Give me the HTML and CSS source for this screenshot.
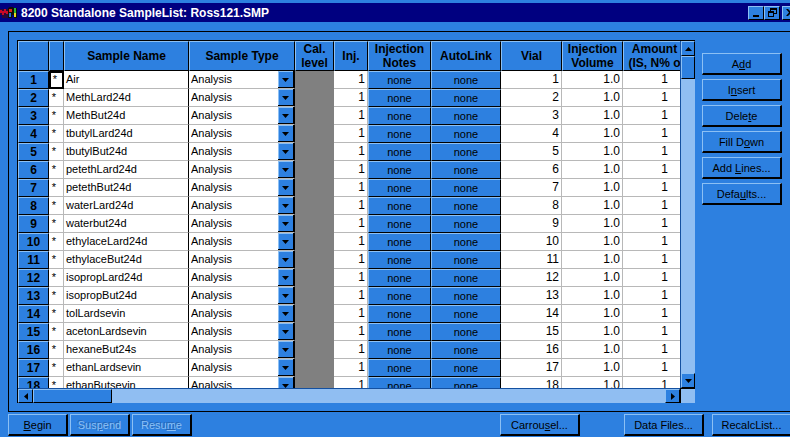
FILE: index.html
```html
<!DOCTYPE html>
<html lang="en">
<head>
  <meta charset="UTF-8">
  <meta name="viewport" content="width=device-width, initial-scale=1.0">
  <title>8200 Standalone SampleList: Ross121.SMP</title>
  <link rel="stylesheet" href="styles.css">
</head>
<body>

  <header class="titlebar">
    <svg class="app-icon" width="17" height="13" viewBox="0 0 17 13">
      <path d="M0 3h8v9H2V9H0z" fill="#280838"/>
      <path d="M0 4h2v1h2V3h2v2h2v3H6V7H4v2H2V7H0z" fill="#c80828"/>
      <path d="M8 2l2-1h3l1 1h3v10h-3V9h-2v3H8z" fill="#101008"/>
      <path d="M9 3h3v3H9z" fill="#e02818"/>
      <path d="M14 2h2v5h-2z" fill="#28b838"/>
      <path d="M9 7h2v4H9z" fill="#2878d8"/>
      <path d="M14 7h2v4h-2z" fill="#e8d820"/>
    </svg>
    <h1>8200 Standalone SampleList: Ross121.SMP</h1>
    <div class="window-controls">
      <button type="button" aria-label="Minimize">
        <svg width="12" height="10" viewBox="0 0 12 10"><path d="M3 7h6v2H3z"/></svg>
      </button>
      <button type="button" aria-label="Restore">
        <svg width="12" height="10" viewBox="0 0 12 10"><path d="M4 0h7v6H8V5h2V2H5v1H4zM2 3h6v6H2zM3 5v3h4V5z" fill-rule="evenodd"/></svg>
      </button>
      <button type="button" class="close" aria-label="Close">
        <svg width="12" height="10" viewBox="0 0 12 10"><path d="M2 1h2l2 2 2-2h2L7 4.500 10 8H8L6 6 4 8H2l3-3.500z"/></svg>
      </button>
    </div>
  </header>

  <main class="panel">
    <div class="grid">
      <div class="viewport">
        <table class="samples">
          <colgroup>
            <col class="col-num"><col class="col-mark"><col class="col-name"><col class="col-type">
            <col class="col-cal"><col class="col-inj"><col class="col-notes"><col class="col-link">
            <col class="col-vial"><col class="col-vial"><col class="col-notes">
          </colgroup>
          <thead>
            <tr>
              <th></th>
              <th></th>
              <th>Sample Name</th>
              <th>Sample Type</th>
              <th>Cal.<br>level</th>
              <th>Inj.</th>
              <th>Injection<br>Notes</th>
              <th>AutoLink</th>
              <th>Vial</th>
              <th>Injection<br>Volume</th>
              <th>Amount<br>(IS, N% o</th>
            </tr>
          </thead>
          <tbody id="sample-rows"></tbody>
        </table>
      </div>
      <div class="scroll scroll-v">
        <button type="button" aria-label="Scroll up"><svg width="7" height="4" viewBox="0 0 7 4"><path d="M0 4h7L3.500 0z"/></svg></button>
        <div class="thumb"></div>
        <button type="button" class="last" aria-label="Scroll down"><svg width="7" height="4" viewBox="0 0 7 4"><path d="M0 0h7L3.500 4z"/></svg></button>
      </div>
      <div class="scroll scroll-h">
        <button type="button" aria-label="Scroll left"><svg width="4" height="7" viewBox="0 0 4 7"><path d="M4 0v7L0 3.500z"/></svg></button>
        <div class="thumb"></div>
        <button type="button" class="last" aria-label="Scroll right"><svg width="4" height="7" viewBox="0 0 4 7"><path d="M0 0v7l4-3.500z"/></svg></button>
      </div>
      <div class="corner"></div>
    </div>

    <div class="actions">
      <button type="button" class="btn">A<u>d</u>d</button>
      <button type="button" class="btn">I<u>n</u>sert</button>
      <button type="button" class="btn">Dele<u>t</u>e</button>
      <button type="button" class="btn">Fill D<u>o</u>wn</button>
      <button type="button" class="btn">Add <u>L</u>ines...</button>
      <button type="button" class="btn">Defa<u>u</u>lts...</button>
    </div>
  </main>

  <footer class="toolbar">
    <button type="button" class="btn small"><u>B</u>egin</button>
    <button type="button" class="btn small" disabled>Sus<u>p</u>end</button>
    <button type="button" class="btn small" disabled>Resu<u>m</u>e</button>
    <button type="button" class="btn carrousel">Carrou<u>s</u>el...</button>
    <button type="button" class="btn">Data Files...</button>
    <button type="button" class="btn recalc">RecalcList...</button>
  </footer>

  <script>
    const names = [
      'Air', 'MethLard24d', 'MethBut24d', 'tbutylLard24d', 'tbutylBut24d',
      'petethLard24d', 'petethBut24d', 'waterLard24d', 'waterbut24d',
      'ethylaceLard24d', 'ethylaceBut24d', 'isopropLard24d', 'isopropBut24d',
      'tolLardsevin', 'acetonLardsevin', 'hexaneBut24s', 'ethanLardsevin', 'ethanButsevin'
    ];

    document.getElementById('sample-rows').innerHTML = names.map(function(name, i) {
      const n = i + 1;
      return `<tr>
        <th scope="row">${n}</th>
        <td class="mark${i === 0 ? ' active' : ''}">*</td>
        <td class="name">${name}</td>
        <td class="type"><select aria-label="Sample type ${n}"><option>Analysis</option></select></td>
        <td class="cal"></td>
        <td class="num">1</td>
        <td class="link"><button type="button">none</button></td>
        <td class="link"><button type="button">none</button></td>
        <td class="num">${n}</td>
        <td class="num">1.0</td>
        <td class="num amount">1</td>
      </tr>`;
    }).join('');
  </script>

</body>
</html>
```
FILE: styles.css
```css
* {
  margin: 0;
  padding: 0;
  box-sizing: border-box;
}

:root {
  --face: #2d80e0;
  --light: #8cc0f4;
  --shade: #1450a0;
}

body {
  height: 100vh;
  display: flex;
  flex-direction: column;
  overflow: hidden;
  padding-top: 3px;
  background-color: var(--face);
  color: #000;
  font-family: "Liberation Sans", Arial, sans-serif;
  font-size: 11px;
}

button,
select {
  font: inherit;
  color: inherit;
}

button {
  display: flex;
  align-items: center;
  justify-content: center;
  background-color: var(--face);
  border: 1px solid #000;
  border-top-color: var(--light);
  border-left-color: var(--light);
}

/* title bar */
.titlebar {
  display: flex;
  align-items: center;
  height: 19px;
  background-color: #000080;
  color: #fff;
}

.app-icon {
  margin-right: 4px;
}

.titlebar h1 {
  font-size: 12px;
  line-height: 16px;
}

.window-controls {
  display: flex;
  margin-left: auto;
  margin-right: -8px;
}

.window-controls button {
  width: 16px;
  height: 14px;
}

.window-controls .close {
  margin-left: 2px;
}

/* main panel */
.panel {
  flex: 1;
  min-height: 0;
  display: flex;
  margin: 9px 0 0 8px;
  padding: 8px;
  border: 1px solid #000;
  border-right: none;
}

.grid {
  flex: 1;
  min-width: 0;
  display: grid;
  grid-template-columns: minmax(0, 1fr) 15px;
  grid-template-rows: minmax(0, 1fr) 15px;
  border-top: 1px solid #000;
  border-left: 1px solid #000;
}

.viewport {
  overflow: hidden;
  background-color: #fff;
}

.samples {
  width: 668px;
  table-layout: fixed;
  border-collapse: separate;
  border-spacing: 0;
}

.col-num { width: 31px; }
.col-mark { width: 15px; }
.col-name { width: 125px; }
.col-type { width: 106px; }
.col-cal { width: 39px; }
.col-inj { width: 34px; }
.col-notes { width: 63px; }
.col-link { width: 70px; }
.col-vial { width: 61px; }

.samples th {
  background-color: var(--face);
  border: 1px solid #000;
  border-top-color: var(--light);
  border-left-color: var(--light);
  font-size: 12px;
  line-height: 14px;
  white-space: nowrap;
}

.samples thead th {
  height: 30px;
}

.samples tbody th,
.samples td {
  height: 18px;
}

.samples td {
  padding-bottom: 2px;
  border-right: 1px solid #b8b8b8;
  border-bottom: 1px solid #b8b8b8;
  line-height: 14px;
}

.samples .mark {
  padding-right: 4px;
  text-align: center;
}

.samples .active {
  padding-right: 3px;
  border: 1px solid #000;
  outline: 1px solid #000;
  outline-offset: -2px;
}

.samples .name {
  padding-left: 2px;
  border-right-color: #000;
}

.samples .type {
  padding: 0;
  border-right-color: #000;
}

.type select {
  display: block;
  width: 100%;
  height: 17px;
  padding: 0 0 2px 2px;
  border: none;
  border-radius: 0;
  appearance: none;
  background: #fff url("data:image/svg+xml,%3Csvg xmlns='http://www.w3.org/2000/svg' width='16' height='17'%3E%3Cpath fill='%23000' d='M0 0h16v17H0z'/%3E%3Cpath fill='%238cc0f4' d='M0 0h15v16H0z'/%3E%3Cpath fill='%232d80e0' d='M1 1h14v15H1z'/%3E%3Cpath d='M4 7h7l-3.500 4z'/%3E%3C/svg%3E") no-repeat right top;
}

.samples .cal {
  background-color: #808080;
  border-color: #808080;
}

.samples .num {
  padding-right: 2px;
  text-align: right;
  font-size: 12px;
}

.samples .amount {
  padding-right: 17px;
}

.samples .link {
  padding: 0;
  border: none;
}

.link button {
  width: 100%;
  height: 18px;
}

/* scroll bars */
.scroll {
  display: flex;
  background-color: #90bef2;
  border: 0 solid var(--shade);
}

.scroll button,
.thumb {
  flex: none;
  background-color: var(--face);
  border: 1px solid #000;
  border-top-color: var(--light);
  border-left-color: var(--light);
}

.scroll .last {
  margin-top: auto;
}

.scroll-v {
  flex-direction: column;
  border-left-width: 1px;
}

.scroll-v button {
  height: 15px;
}

.scroll-v .thumb {
  height: 23px;
}

.scroll-h {
  border-top-width: 1px;
}

.scroll-h button {
  width: 15px;
}

.scroll-h .thumb {
  width: 79px;
}

.scroll-h .last {
  margin-top: 0;
  margin-left: auto;
}

.corner {
  background-color: #90bef2;
  border-top: 1px solid #000;
  border-left: 1px solid #000;
}

/* push buttons */
.btn {
  width: 80px;
  height: 22px;
  border-right-width: 2px;
  border-bottom-width: 2px;
  white-space: pre;
}

.btn:disabled {
  color: var(--light);
  text-shadow: -1px -1px #2464b4;
}

.actions {
  display: flex;
  flex-direction: column;
  gap: 4px;
  margin-left: 7px;
  padding-top: 13px;
}

.toolbar {
  display: flex;
  gap: 2px;
  padding: 2px 0 1px 8px;
}

.toolbar .small {
  width: 60px;
}

.toolbar .carrousel {
  margin-left: auto;
  margin-right: 42px;
}

.toolbar .recalc {
  margin-left: 6px;
  margin-right: -2px;
}
```
